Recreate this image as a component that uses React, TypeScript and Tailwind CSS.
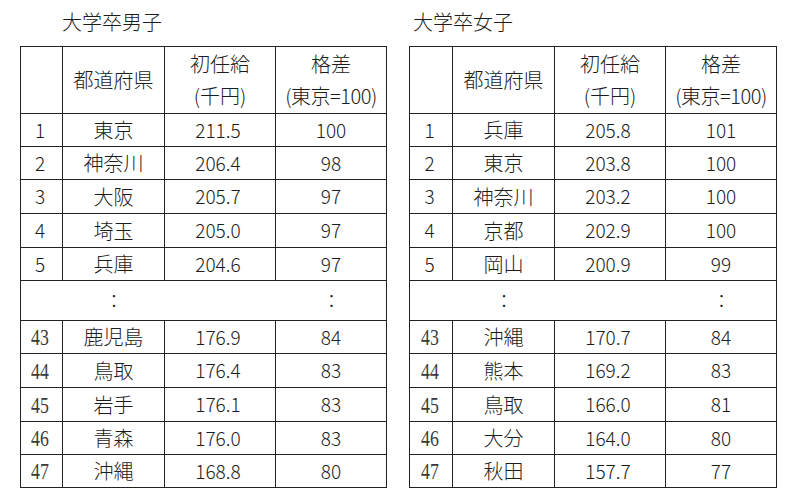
import React from "react";

type Row = { rank: string; pref: string; pay: string; diff: string };

const men: Row[] = [
  { rank: "1", pref: "東京", pay: "211.5", diff: "100" },
  { rank: "2", pref: "神奈川", pay: "206.4", diff: "98" },
  { rank: "3", pref: "大阪", pay: "205.7", diff: "97" },
  { rank: "4", pref: "埼玉", pay: "205.0", diff: "97" },
  { rank: "5", pref: "兵庫", pay: "204.6", diff: "97" },
];
const menBottom: Row[] = [
  { rank: "43", pref: "鹿児島", pay: "176.9", diff: "84" },
  { rank: "44", pref: "鳥取", pay: "176.4", diff: "83" },
  { rank: "45", pref: "岩手", pay: "176.1", diff: "83" },
  { rank: "46", pref: "青森", pay: "176.0", diff: "83" },
  { rank: "47", pref: "沖縄", pay: "168.8", diff: "80" },
];
const women: Row[] = [
  { rank: "1", pref: "兵庫", pay: "205.8", diff: "101" },
  { rank: "2", pref: "東京", pay: "203.8", diff: "100" },
  { rank: "3", pref: "神奈川", pay: "203.2", diff: "100" },
  { rank: "4", pref: "京都", pay: "202.9", diff: "100" },
  { rank: "5", pref: "岡山", pay: "200.9", diff: "99" },
];
const womenBottom: Row[] = [
  { rank: "43", pref: "沖縄", pay: "170.7", diff: "84" },
  { rank: "44", pref: "熊本", pay: "169.2", diff: "83" },
  { rank: "45", pref: "鳥取", pay: "166.0", diff: "81" },
  { rank: "46", pref: "大分", pay: "164.0", diff: "80" },
  { rank: "47", pref: "秋田", pay: "157.7", diff: "77" },
];

const topHeights = ["h-[33px]", "h-[33px]", "h-[34px]", "h-[34px]", "h-[33px]"];
const bottomHeights = ["h-[33px]", "h-[34px]", "h-[34px]", "h-[33px]", "h-[33px]"];

const cell = "border-r border-b border-[#222] flex items-center justify-center";

function DataRow({ r, h, serif }: { r: Row; h: string; serif?: boolean }) {
  return (
    <>
      <div className={`${cell} ${h} pr-[3px]`}>
        {serif ? (
          <span
            className="inline-block text-[24px] text-[#3a3a3a] scale-x-[0.74] leading-none"
            style={{ fontFamily: "'Liberation Serif', serif", fontWeight: 400 }}
          >
            {r.rank}
          </span>
        ) : (
          <span className="text-[19px]">{r.rank}</span>
        )}
      </div>
      <div className={`${cell} ${h} text-[20px]`}>{r.pref}</div>
      <div className={`${cell} ${h} text-[19px] pr-[4px]`}>{r.pay}</div>
      <div className={`${cell} ${h} text-[19px]`}>{r.diff}</div>
    </>
  );
}

function Table({
  title,
  top,
  bottom,
  cols,
  titleClass,
}: {
  title: string;
  top: Row[];
  bottom: Row[];
  cols: string;
  titleClass: string;
}) {
  return (
    <div className="flex flex-col">
      <div className={`h-[46px] flex items-center text-[20px] pb-[2px] ${titleClass}`}>{title}</div>
      <div className={`grid ${cols} border-l border-t border-[#222]`}>
        <div className={`${cell} h-[67px]`}></div>
        <div className={`${cell} h-[67px] text-[20px]`}>都道府県</div>
        <div className={`${cell} h-[67px] flex-col text-[20px] leading-[32px]`}>
          <span>初任給</span>
          <span>(千円)</span>
        </div>
        <div className={`${cell} h-[67px] flex-col text-[20px] leading-[32px]`}>
          <span>格差</span>
          <span className="tracking-[-0.5px]">(東京=100)</span>
        </div>
        {top.map((r, i) => (
          <DataRow key={r.rank} r={r} h={topHeights[i]} />
        ))}
        <div className={`col-span-4 border-r border-b border-[#222] h-[40px] grid ${cols} items-center text-[18px]`}>
          <div></div>
          <div className="text-center">：</div>
          <div></div>
          <div className="text-center">：</div>
        </div>
        {bottom.map((r, i) => (
          <DataRow key={r.rank} r={r} h={bottomHeights[i]} serif />
        ))}
      </div>
    </div>
  );
}

export default function App() {
  return (
    <div className="w-[800px] h-[496px] bg-white text-[#1c1c1c] font-['Noto_Sans_CJK_JP','Noto_Sans',sans-serif] font-light flex overflow-hidden">
      <div className="ml-[20px]">
        <Table
          title="大学卒男子"
          top={men}
          bottom={menBottom}
          cols="grid-cols-[42px_102px_111px_111px]"
          titleClass="pl-[42px]"
        />
      </div>
      <div className="ml-[22px]">
        <Table
          title="大学卒女子"
          top={women}
          bottom={womenBottom}
          cols="grid-cols-[43px_102px_111px_111px]"
          titleClass="pl-[4px]"
        />
      </div>
    </div>
  );
}
